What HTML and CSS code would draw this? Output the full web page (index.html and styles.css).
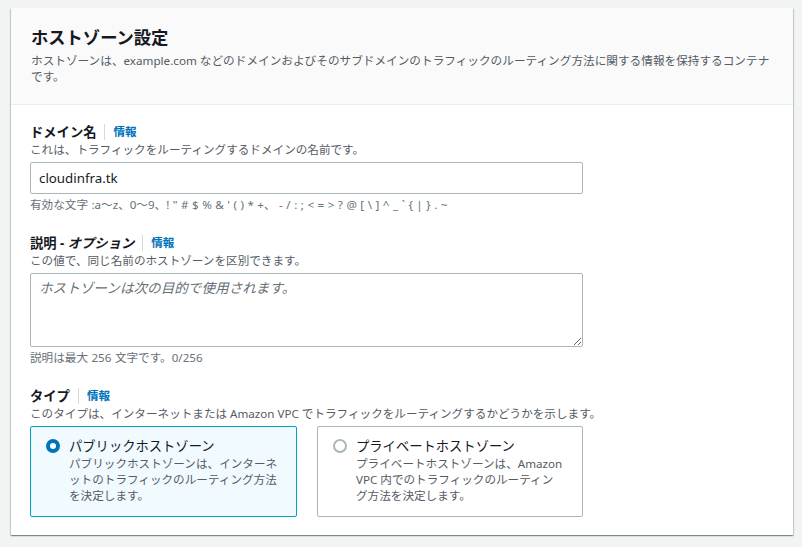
FILE: index.html
```html
<!DOCTYPE html>
<html lang="ja">
<head>
<meta charset="utf-8">
<title>ホストゾーン設定</title>
<link rel="stylesheet" href="styles.css">
</head>
<body>
<div class="page">
  <section class="card">
    <header class="card-header">
      <h2 class="title">ホストゾーン設定</h2>
      <p class="subtitle">ホストゾーンは、example.com などのドメインおよびそのサブドメインのトラフィックのルーティング方法に関する情報を保持するコンテナです。</p>
    </header>
    <div class="card-body">
      <div class="field">
        <div class="label-row"><span class="label">ドメイン名</span><a class="info">情報</a></div>
        <p class="desc">これは、トラフィックをルーティングするドメインの名前です。</p>
        <input class="input" type="text" value="cloudinfra.tk">
        <p class="hint">有効な文字 :a〜z、0〜9、! " # $ % &amp; ' ( ) * +、 - / : ; &lt; = &gt; ? @ [ \ ] ^ _ ` { | } . ~</p>
      </div>
      <div class="field">
        <div class="label-row"><span class="label">説明 - <i>オプション</i></span><a class="info">情報</a></div>
        <p class="desc">この値で、同じ名前のホストゾーンを区別できます。</p>
        <textarea class="textarea" placeholder="ホストゾーンは次の目的で使用されます。"></textarea>
        <p class="hint">説明は最大 256 文字です。0/256</p>
      </div>
      <div class="field">
        <div class="label-row"><span class="label">タイプ</span><a class="info">情報</a></div>
        <p class="desc">このタイプは、インターネットまたは Amazon VPC でトラフィックをルーティングするかどうかを示します。</p>
        <div class="tiles">
          <div class="tile selected">
            <span class="radio checked"></span>
            <div class="tile-text">
              <div class="tile-title">パブリックホストゾーン</div>
              <div class="tile-desc">パブリックホストゾーンは、インターネットのトラフィックのルーティング方法を決定します。</div>
            </div>
          </div>
          <div class="tile">
            <span class="radio"></span>
            <div class="tile-text">
              <div class="tile-title">プライベートホストゾーン</div>
              <div class="tile-desc">プライベートホストゾーンは、Amazon VPC 内でのトラフィックのルーティン<br>グ方法を決定します。</div>
            </div>
          </div>
        </div>
      </div>
    </div>
  </section>
</div>
</body>
</html>
```

FILE: styles.css
```css
* { box-sizing: border-box; }
html, body { margin: 0; padding: 0; background: #f2f3f3; }
body {
  font-family: "Noto Sans", "Noto Sans CJK JP", sans-serif;
  color: #16191f;
  width: 802px;
  height: 547px;
  overflow: hidden;
}
.page { padding: 8px 9px 11px 11px; }
.card {
  background: #fff;
  box-shadow: 0 1px 1px 0 rgba(0,28,36,.3), 1px 1px 1px 0 rgba(0,28,36,.15), -1px 1px 1px 0 rgba(0,28,36,.15);
}
.card-header {
  background: #fafafa;
  border-bottom: 1px solid #eaeded;
  padding: 19px 20px 19px 20px;
}
.title {
  margin: 0;
  font-size: 17.3px;
  line-height: 22px;
  font-weight: 700;
}
.subtitle {
  margin: 4px 0 0;
  font-size: 11.65px;
  line-height: 16px;
  color: #545b64;
}
.card-body { padding: 17px 19px 18px 19px; }
.field + .field { margin-top: 20px; }
.label-row { display: flex; align-items: center; height: 20px; }
.label { font-size: 13.3px; font-weight: 700; line-height: 20px; }
.label i { font-style: italic; }
.info {
  margin-left: 8px;
  padding-left: 8px;
  border-left: 1px solid #d5dbdb;
  font-size: 11.6px;
  line-height: 16px;
  font-weight: 700;
  color: #0073bb;
}
.desc { margin: 0; font-size: 11.6px; line-height: 16px; color: #545b64; }
.hint { margin: 3px 0 0; font-size: 11.6px; line-height: 16px; color: #687078; word-spacing: 0.5px; }
.input, .textarea {
  display: block;
  width: 553px;
  margin-top: 4px;
  border: 1px solid #aab7b8;
  border-radius: 2px;
  background: #fff;
  font-family: "Noto Sans", "Noto Sans CJK JP", sans-serif;
  color: #16191f;
}
.input { height: 32px; padding: 4px 8px; font-size: 13.3px; }
.textarea {
  height: 74px;
  padding: 4px 8px;
  font-size: 13.6px;
  line-height: 20px;
  resize: vertical;
}
.textarea::placeholder { color: #687078; font-style: italic; }
.tiles {
  display: grid;
  grid-template-columns: 267px 266px;
  gap: 20px;
  margin-top: 4px;
}
.tile {
  display: flex;
  align-items: flex-start;
  gap: 9px;
  height: 91px;
  padding: 9px 0 14px 15px;
  border: 1px solid #aab7b8;
  border-radius: 2px;
  background: #fff;
}
.tile.selected { border-color: #00a1c9; background: #f1faff; }
.tile-text { width: 209.2px; }
.radio {
  flex: none;
  width: 14px;
  height: 14px;
  margin-top: 3px;
  border: 2px solid #aab7b8;
  border-radius: 50%;
  background: #fff;
}
.radio.checked { border: 4px solid #0073bb; }
.tile-title { font-size: 13.3px; line-height: 20px; }
.tile-desc { font-size: 11.6px; line-height: 16px; color: #545b64; }
```
